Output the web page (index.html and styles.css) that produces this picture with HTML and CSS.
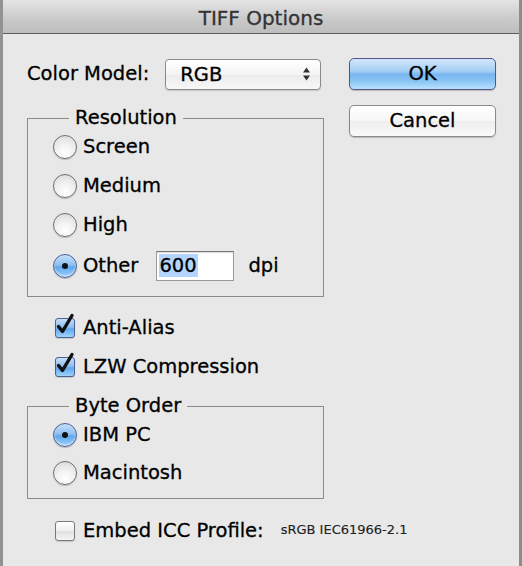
FILE: index.html
```html
<!DOCTYPE html>
<html>
<head>
<meta charset="utf-8">
<link rel="stylesheet" href="styles.css">
</head>
<body>
<div class="window">
  <div class="titlebar">TIFF Options</div>
  <div class="content">
    <div class="main">
      <div class="model-row">
        <span class="label">Color Model:</span>
        <div class="select">
          <span>RGB</span>
          <svg class="arrows" width="9" height="14" viewBox="0 0 9 14"><path d="M4.5 0.5 L8 5.5 L1 5.5 Z M4.5 13.5 L8 8.5 L1 8.5 Z" fill="#333"/></svg>
        </div>
      </div>

      <fieldset class="group res">
        <legend>Resolution</legend>
        <div class="opt"><span class="radio"></span><span>Screen</span></div>
        <div class="opt"><span class="radio"></span><span>Medium</span></div>
        <div class="opt"><span class="radio"></span><span>High</span></div>
        <div class="opt other"><span class="radio on"></span><span>Other</span>
          <div class="field"><span class="sel">600</span></div>
          <span class="unit">dpi</span>
        </div>
      </fieldset>

      <div class="checks">
        <div class="opt"><span class="check on"><svg width="22" height="24" viewBox="0 0 22 24"><path d="M4.5 13.5 L8.5 18.5 L18 2.5" fill="none" stroke="#111" stroke-width="3.4" stroke-linecap="round" stroke-linejoin="round"/></svg></span><span>Anti-Alias</span></div>
        <div class="opt"><span class="check on"><svg width="22" height="24" viewBox="0 0 22 24"><path d="M4.5 13.5 L8.5 18.5 L18 2.5" fill="none" stroke="#111" stroke-width="3.4" stroke-linecap="round" stroke-linejoin="round"/></svg></span><span>LZW Compression</span></div>
      </div>

      <fieldset class="group byte">
        <legend>Byte Order</legend>
        <div class="opt"><span class="radio on"></span><span>IBM PC</span></div>
        <div class="opt"><span class="radio"></span><span>Macintosh</span></div>
      </fieldset>

      <div class="opt embed"><span class="check"></span><span>Embed ICC Profile:</span><span class="profile">sRGB IEC61966-2.1</span></div>
    </div>
    <div class="buttons">
      <div class="btn ok">OK</div>
      <div class="btn">Cancel</div>
    </div>
  </div>
</div>
</body>
</html>
```

FILE: styles.css
```css
html, body {
  margin: 0;
  padding: 0;
  width: 522px;
  height: 566px;
  overflow: hidden;
  background: #e8e8e8;
}
.window {
  box-sizing: border-box;
  width: 522px;
  height: 566px;
  border-left: 3px solid #929292;
  border-right: 3px solid #8c8c8c;
  background: #e8e8e8;
  font-family: "DejaVu Sans", sans-serif;
  font-size: 19.5px;
  color: #000;
  -webkit-text-stroke: 0.3px #000;
}
.titlebar {
  height: 33px;
  border-bottom: 1px solid #5f5f5f;
  background: linear-gradient(to bottom, #e4e4e4, #c9c9c9 60%, #bdbdbd);
  text-align: center;
  line-height: 36px;
  font-size: 20px;
  color: #333;
  -webkit-text-stroke: 0.3px #333;
}
.content {
  display: flex;
  padding: 24px 0 0 24px;
  gap: 25px;
}
.main {
  width: 297px;
  display: flex;
  flex-direction: column;
}
.model-row {
  display: flex;
  align-items: center;
  height: 32px;
  gap: 16px;
}
.label { line-height: 24px; white-space: nowrap; }
.select {
  box-sizing: border-box;
  width: 156px;
  height: 31px;
  border: 1px solid #8a8a8a;
  border-radius: 4px;
  background: linear-gradient(to bottom, #ffffff, #f4f4f4 50%, #ececec 51%, #f7f7f7);
  display: flex;
  align-items: center;
  justify-content: space-between;
  padding: 0 9px 0 14px;
  box-shadow: 0 1px 1px rgba(0,0,0,0.15);
}
.group {
  margin: 17px 0 0 0;
  border: 1px solid #8c8c8c;
  padding: 6px 0 15px 25px;
  min-width: 0;
}
.group legend {
  margin-left: 16px;
  padding: 0 6px;
  line-height: 22px;
}
.opt {
  display: flex;
  align-items: center;
  height: 24px;
  line-height: 24px;
  gap: 6px;
  white-space: nowrap;
}
.opt > * { flex: none; }
.group .opt + .opt { margin-top: 15px; }
.group .opt.other { height: 30px; margin-top: 14px; }
.byte { margin-top: 16px; padding-bottom: 13px; }
.byte .opt + .opt { margin-top: 14px; }
.radio {
  box-sizing: border-box;
  width: 24px;
  height: 24px;
  border-radius: 50%;
  border: 1px solid #6e6e6e;
  background: radial-gradient(circle at 50% 75%, #ffffff 0%, #f2f2f2 40%, #d6d6d6 100%);
  box-shadow: inset 0 -1px 2px rgba(255,255,255,0.8), 0 1px 1px rgba(0,0,0,0.2);
  flex: none;
  position: relative;
}
.radio.on {
  border-color: #4a5f93;
  background: linear-gradient(to bottom, #c6e0fb 0%, #8ec0f1 45%, #5ea6ee 55%, #9fd3fb 100%);
}
.radio.on::after {
  content: "";
  position: absolute;
  left: 8px;
  top: 8px;
  width: 6px;
  height: 6px;
  border-radius: 50%;
  background: #111;
}
.field {
  box-sizing: border-box;
  width: 78px;
  height: 30px;
  margin-left: 12px;
  background: #fff;
  border: 1px solid #9a9a9a;
  border-top-color: #777;
  box-shadow: inset 0 1px 1px rgba(0,0,0,0.15);
  padding: 2px 0 0 2px;
  line-height: 24px;
}
.sel { background: #b3d4fc; padding-right: 1px; }
.unit { margin-left: 8px; }
.checks {
  margin: 19px 0 0 28px;
  display: flex;
  flex-direction: column;
  gap: 15px;
}
.checks .opt { gap: 8px; }
.check {
  box-sizing: border-box;
  width: 20px;
  height: 20px;
  border-radius: 3px;
  border: 1px solid #7a7a7a;
  background: linear-gradient(to bottom, #ffffff, #f0f0f0 50%, #e0e0e0 51%, #f4f4f4);
  box-shadow: 0 1px 1px rgba(0,0,0,0.15);
  flex: none;
  position: relative;
}
.check.on {
  border-color: #4a5f93;
  background: linear-gradient(to bottom, #c6e0fb 0%, #8ec0f1 45%, #5ea6ee 55%, #9fd3fb 100%);
}
.check svg {
  position: absolute;
  left: -2px;
  top: -6px;
}
.embed {
  margin: 20px 0 0 28px;
  gap: 8px;
}
.profile {
  font-size: 13px;
  margin-left: 9px;
  align-self: flex-start;
  line-height: 18px;
  margin-top: 2px;
  color: #222;
  -webkit-text-stroke: 0.15px #222;
}
.buttons {
  display: flex;
  flex-direction: column;
  gap: 15px;
}
.btn {
  box-sizing: border-box;
  width: 147px;
  height: 32px;
  border: 1px solid #8a8a8a;
  border-radius: 5px;
  background: linear-gradient(to bottom, #ffffff, #f6f6f6 50%, #ededed 51%, #fafafa);
  box-shadow: 0 1px 1px rgba(0,0,0,0.2);
  text-align: center;
  line-height: 30px;
}
.btn.ok {
  border-color: #55558c;
  background: linear-gradient(to bottom, #d2e6fb 0%, #a6cff5 40%, #78b6f0 52%, #8cc6f5 75%, #b8e2ff 100%);
}
```
